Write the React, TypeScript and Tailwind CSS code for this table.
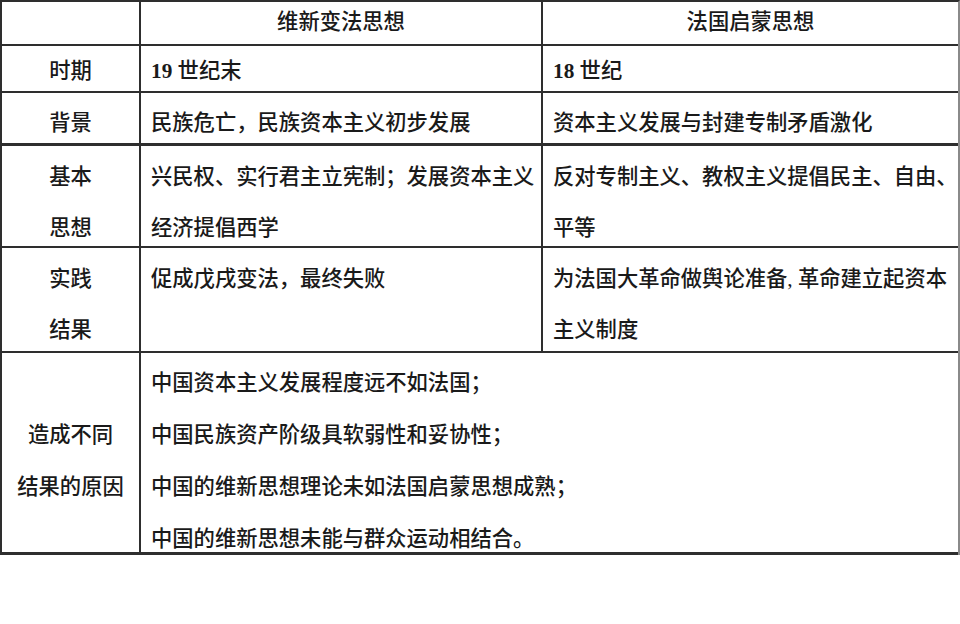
import React from "react";

const font = { fontFamily: '"Liberation Serif", "Noto Sans CJK SC", serif' };

function Row({
  h,
  left,
  mid,
  right,
  leftPt,
  midPt,
  rightPt,
  thick,
}: {
  h: string;
  left: React.ReactNode;
  mid: React.ReactNode;
  right: React.ReactNode;
  leftPt: string;
  midPt: string;
  rightPt: string;
  thick?: boolean;
}) {
  return (
    <div className={`flex ${h} ${thick ? "border-b-[3px]" : "border-b-2"} border-[#2e2e2e]`}>
      <div className={`w-[139px] shrink-0 border-r-2 border-[#2e2e2e] text-center leading-[51px] ${leftPt}`}>{left}</div>
      <div className={`w-[402px] shrink-0 border-r-2 border-[#2e2e2e] pl-[10px] leading-[51px] whitespace-nowrap ${midPt}`}>{mid}</div>
      <div className={`flex-1 pl-[10px] leading-[51px] whitespace-nowrap ${rightPt}`}>{right}</div>
    </div>
  );
}

export default function App() {
  return (
    <div className="w-[960px] h-[624px] bg-white text-[#1a1a1a] text-[21.3px] font-medium" style={font}>
      <div className="w-[960px] border-l-2 border-t-2 border-r-2 border-l-[#2e2e2e] border-t-[#2e2e2e] border-r-[#8a8a8a]">
        {/* header */}
        <div className="flex h-[44px] border-b-2 border-[#2e2e2e]">
          <div className="w-[139px] shrink-0 border-r-2 border-[#2e2e2e]"></div>
          <div className="w-[402px] shrink-0 border-r-2 border-[#2e2e2e] flex items-center justify-center">维新变法思想</div>
          <div className="flex-1 flex items-center justify-center">法国启蒙思想</div>
        </div>
        <Row
          h="h-[47px]"
          leftPt="pt-0"
          midPt="pt-0"
          rightPt="pt-0"
          left="时期"
          mid={<><span className="font-bold">19</span> 世纪末</>}
          right={<><span className="font-bold">18</span> 世纪</>}
        />
        <Row
          h="h-[53px]"
          leftPt="pt-[5px]"
          midPt="pt-[5px]"
          rightPt="pt-[5px]"
          thick
          left="背景"
          mid="民族危亡，民族资本主义初步发展"
          right="资本主义发展与封建专制矛盾激化"
        />
        <Row
          h="h-[102px]"
          leftPt="pt-[6px]"
          midPt="pt-[6px]"
          rightPt="pt-[6px]"
          left={<>基本<br />思想</>}
          mid={<>兴民权、实行君主立宪制；发展资本主义<br />经济提倡西学</>}
          right={<>反对专制主义、教权主义提倡民主、自由、<br />平等</>}
        />
        <Row
          h="h-[105px]"
          leftPt="pt-[6px]"
          midPt="pt-[6px]"
          rightPt="pt-[6px]"
          left={<>实践<br />结果</>}
          mid="促成戊戌变法，最终失败"
          right={<>为法国大革命做舆论准备, 革命建立起资本<br />主义制度</>}
        />
        <div className="flex h-[202px] border-b-[3px] border-[#2e2e2e]">
          <div className="w-[139px] shrink-0 border-r-2 border-[#2e2e2e] text-center leading-[52px] pt-[56px]">
            造成不同<br />结果的原因
          </div>
          <div className="flex-1 pl-[10px] leading-[52px] pt-[4px]">
            中国资本主义发展程度远不如法国；<br />
            中国民族资产阶级具软弱性和妥协性；<br />
            中国的维新思想理论未如法国启蒙思想成熟；<br />
            中国的维新思想未能与群众运动相结合。
          </div>
        </div>
      </div>
    </div>
  );
}
